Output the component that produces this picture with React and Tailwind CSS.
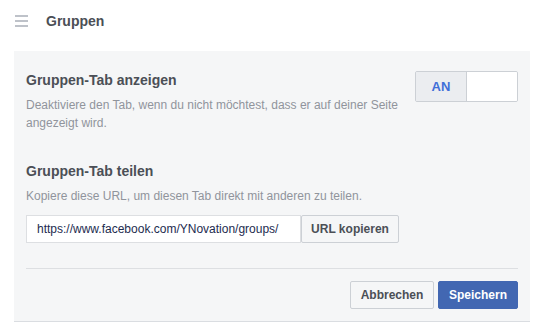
const Hamburger = () => (
  <svg width="13" height="12" viewBox="0 0 13 12" className="block">
    <rect x="0" y="0" width="13" height="2" fill="#bec2c9" />
    <rect x="0" y="5" width="13" height="2" fill="#bec2c9" />
    <rect x="0" y="10" width="13" height="2" fill="#bec2c9" />
  </svg>
)

export default function App() {
  return (
    <div className="h-[331px] w-[549px] bg-white font-['Liberation_Sans',Arial,sans-serif]">
      {/* header */}
      <div className="flex h-[41px] items-center pl-[15px]">
        <Hamburger />
        <h1 className="ml-[18px] text-[14px] font-bold leading-[18px] text-[#4b4f56]">Gruppen</h1>
      </div>

      <div className="mt-[10px] ml-[14px] w-[516px] border-b border-[#dadde1] bg-[#f5f6f7] px-3 pt-5 pb-3">
        {/* show tab */}
        <div className="flex items-start">
          <div className="flex-1">
            <h2 className="text-[14px] font-bold leading-[18px] text-[#4b4f56]">Gruppen-Tab anzeigen</h2>
            <p className="mt-[7px] text-[12px] leading-[18px] text-[#90949c]">
              Deaktiviere den Tab, wenn du nicht möchtest, dass er auf deiner Seite angezeigt wird.
            </p>
          </div>
          <div className="flex h-[31px] w-[103px] overflow-hidden rounded-[2px] border border-[#ccd0d5]">
            <div className="flex w-[51px] items-center justify-center border-r border-[#ccd0d5] bg-[#ebedf0] text-[13px] font-bold text-[#3f6fd8]">
              AN
            </div>
            <div className="flex-1 bg-white" />
          </div>
        </div>

        {/* share tab */}
        <div className="mt-[30px]">
          <h2 className="text-[14px] font-bold leading-[18px] text-[#4b4f56]">Gruppen-Tab teilen</h2>
          <p className="mt-[7px] text-[12px] leading-[18px] text-[#90949c]">
            Kopiere diese URL, um diesen Tab direkt mit anderen zu teilen.
          </p>
          <div className="mt-[10px] flex h-[28px]">
            <div className="flex w-[275px] items-center border border-[#dddfe2] bg-white px-[10px] text-[12px] text-[#1d2b4f]">
              https://www.facebook.com/YNovation/groups/
            </div>
            <button className="w-[98px] rounded-[2px] border border-[#ccd0d5] bg-[#f5f6f7] text-[12px] font-bold text-[#4b4f56]">
              URL kopieren
            </button>
          </div>
        </div>

        <div className="mt-[25px] h-px bg-[#dddfe2]" />

        <div className="mt-3 flex justify-end gap-1">
          <button className="h-[28px] w-[84px] rounded-[2px] border border-[#ccd0d5] bg-[#f5f6f7] text-[12px] font-bold text-[#4b4f56]">
            Abbrechen
          </button>
          <button className="h-[28px] w-[80px] rounded-[2px] border border-[#4267b2] bg-[#4267b2] text-[12px] font-bold text-white">
            Speichern
          </button>
        </div>
      </div>
    </div>
  )
}
